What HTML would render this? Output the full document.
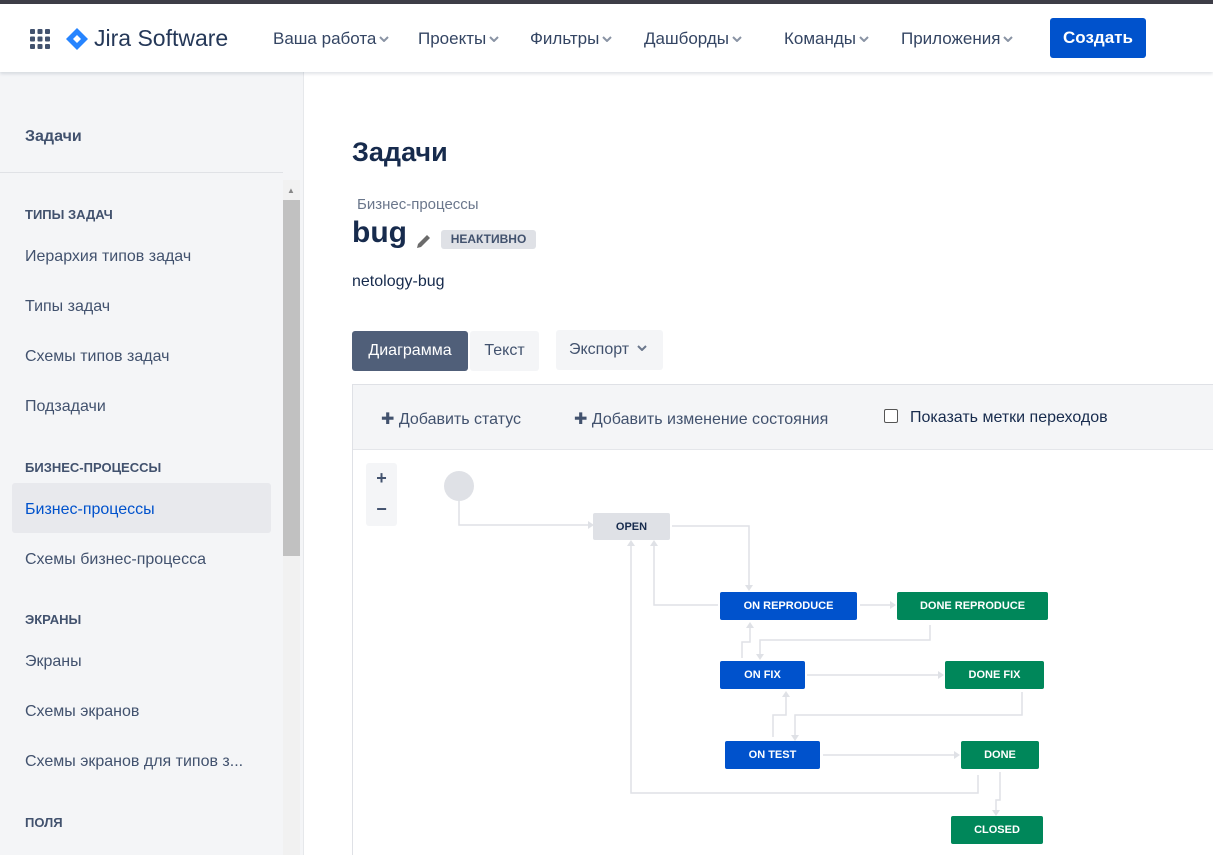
<!DOCTYPE html>
<html style="width:1213px;height:855px;overflow:hidden"><head><meta charset="utf-8"><style>
*{box-sizing:border-box;margin:0;padding:0}
body{width:1213px;height:855px;overflow:hidden;background:#fff;font-family:"Liberation Sans","DejaVu Sans",sans-serif;color:#172b4d;position:relative}
.top{position:absolute;left:0;top:0;width:1213px;height:4px;background:#3d3d47}
.hdr{position:absolute;left:0;top:4px;width:1213px;height:68px;background:#fff;box-shadow:0 2px 3px rgba(9,30,66,.12);z-index:2}
.nav{position:absolute;top:25px;font-size:17px;color:#344563}
.nav svg{margin-left:3px;vertical-align:2px}
.btn{position:absolute;left:1050px;top:14px;width:96px;height:40px;background:#0052cc;color:#fff;border-radius:3px;font-size:17px;font-weight:bold;text-align:center;line-height:40px}
.side{position:absolute;left:0;top:72px;width:304px;height:783px;background:#f4f5f7;border-right:1px solid #e6e8eb}
.si{position:absolute;left:25px;font-size:16px;color:#42526e}
.sh{position:absolute;left:25px;font-size:13px;font-weight:bold;color:#42526e}
.sel{position:absolute;left:12px;top:411px;width:259px;height:50px;background:#e8e9ed;border-radius:3px}
.sb{position:absolute;left:283px;top:108px;width:17px;height:675px;background:#f1f1f1}
.sbt{position:absolute;left:283px;top:128px;width:17px;height:356px;background:#c1c1c1}
.box{position:absolute;font-size:11px;font-weight:bold;color:#fff;text-align:center;border-radius:2px;display:flex;align-items:center;justify-content:center}
.b{background:#0052cc}.g{background:#00875a}
</style></head><body>
<div class="top"></div>
<div class="hdr">
<svg style="position:absolute;left:30px;top:25px" width="20" height="20"><g fill="#42526e"><rect x="0" y="0" width="5" height="5" rx="1"/><rect x="7.5" y="0" width="5" height="5" rx="1"/><rect x="15" y="0" width="5" height="5" rx="1"/><rect x="0" y="7.5" width="5" height="5" rx="1"/><rect x="7.5" y="7.5" width="5" height="5" rx="1"/><rect x="15" y="7.5" width="5" height="5" rx="1"/><rect x="0" y="15" width="5" height="5" rx="1"/><rect x="7.5" y="15" width="5" height="5" rx="1"/><rect x="15" y="15" width="5" height="5" rx="1"/></g></svg>
<svg style="position:absolute;left:66px;top:24px" width="22" height="22" viewBox="0 0 22 22"><path d="M11 0L22 11L11 22L0 11Z" fill="#2684ff"/><path d="M11 7L15 11L11 15L7 11Z" fill="#fff"/></svg>
<div style="position:absolute;left:94px;top:21px;font-size:23px;color:#253858">Jira Software</div>
<div class="nav" style="left:273px">Ваша работа<svg width="10" height="6"><path d="M1 1L5 5L9 1" stroke="#8993a4" stroke-width="2" fill="none"/></svg></div>
<div class="nav" style="left:418px">Проекты<svg width="10" height="6"><path d="M1 1L5 5L9 1" stroke="#8993a4" stroke-width="2" fill="none"/></svg></div>
<div class="nav" style="left:530px">Фильтры<svg width="10" height="6"><path d="M1 1L5 5L9 1" stroke="#8993a4" stroke-width="2" fill="none"/></svg></div>
<div class="nav" style="left:644px">Дашборды<svg width="10" height="6"><path d="M1 1L5 5L9 1" stroke="#8993a4" stroke-width="2" fill="none"/></svg></div>
<div class="nav" style="left:784px">Команды<svg width="10" height="6"><path d="M1 1L5 5L9 1" stroke="#8993a4" stroke-width="2" fill="none"/></svg></div>
<div class="nav" style="left:901px">Приложения<svg width="10" height="6"><path d="M1 1L5 5L9 1" stroke="#8993a4" stroke-width="2" fill="none"/></svg></div>
<div class="btn">Создать</div>
</div>
<div class="side">
<div style="position:absolute;left:25px;top:56px;font-size:16px;font-weight:bold;color:#42526e">Задачи</div>
<div style="position:absolute;left:0;top:100px;width:283px;border-top:1px solid #e0e2e6"></div>
<div class="sh" style="top:135px">ТИПЫ ЗАДАЧ</div>
<div class="si" style="top:176px">Иерархия типов задач</div>
<div class="si" style="top:226px">Типы задач</div>
<div class="si" style="top:276px">Схемы типов задач</div>
<div class="si" style="top:326px">Подзадачи</div>
<div class="sh" style="top:388px">БИЗНЕС-ПРОЦЕССЫ</div>
<div class="sel"></div>
<div class="si" style="top:429px;color:#0052cc">Бизнес-процессы</div>
<div class="si" style="top:479px">Схемы бизнес-процесса</div>
<div class="sh" style="top:540px">ЭКРАНЫ</div>
<div class="si" style="top:581px">Экраны</div>
<div class="si" style="top:631px">Схемы экранов</div>
<div class="si" style="top:681px">Схемы экранов для типов з...</div>
<div class="sh" style="top:743px">ПОЛЯ</div>
<div class="sb"></div><div class="sbt"></div>
<div style="position:absolute;left:287px;top:114px;font-size:8px;color:#888">▲</div>
</div>
<div style="position:absolute;left:352px;top:137px;font-size:27px;font-weight:bold;color:#172b4d">Задачи</div>
<div style="position:absolute;left:357px;top:196px;font-size:15px;color:#6b778c">Бизнес-процессы</div>
<div style="position:absolute;left:352px;top:216px;font-size:30px;font-weight:bold;color:#172b4d">bug</div>
<svg style="position:absolute;left:415px;top:233px" width="18" height="16" viewBox="0 0 18 16"><path d="M2 15L3 11L12 2L15 5L6 14Z" fill="#6b6b6b"/></svg>
<div style="position:absolute;left:441px;top:230px;width:95px;height:19px;background:#dfe1e6;border-radius:3px;font-size:12px;font-weight:bold;color:#42526e;text-align:center;line-height:19px">НЕАКТИВНО</div>
<div style="position:absolute;left:352px;top:273px;font-size:16px;color:#172b4d">netology-bug</div>
<div style="position:absolute;left:352px;top:331px;width:116px;height:40px;background:#505f79;color:#fff;border-radius:3px;font-size:16px;line-height:40px;text-align:center">Диаграмма</div>
<div style="position:absolute;left:470px;top:331px;width:69px;height:40px;background:#f4f5f7;color:#42526e;border-radius:3px;font-size:16px;line-height:40px;text-align:center">Текст</div>
<div style="position:absolute;left:556px;top:330px;width:107px;height:40px;background:#f4f5f7;color:#42526e;border-radius:3px;font-size:16px;line-height:40px;padding-left:13px">Экспорт <svg width="10" height="6" style="vertical-align:3px;margin-left:3px"><path d="M1 1L5 5L9 1" stroke="#6b778c" stroke-width="2" fill="none"/></svg></div>
<div style="position:absolute;left:352px;top:384px;width:861px;height:471px;border:1px solid #dfe1e6;border-right:none;border-bottom:none"></div>
<div style="position:absolute;left:353px;top:385px;width:860px;height:65px;background:#f4f5f7;border-bottom:1px solid #e4e6ea"></div>
<div style="position:absolute;left:381px;top:409px;font-size:16px;color:#42526e"><b>✚</b> Добавить статус</div>
<div style="position:absolute;left:574px;top:409px;font-size:16px;color:#42526e"><b>✚</b> Добавить изменение состояния</div>
<div style="position:absolute;left:884px;top:409px;width:14px;height:14px;border:1px solid #555;border-radius:2px;background:#fff"></div>
<div style="position:absolute;left:910px;top:409px;font-size:16px;color:#172b4d">Показать метки переходов</div>
<div style="position:absolute;left:366px;top:463px;width:31px;height:63px;background:#f4f5f7;border-radius:3px;color:#42526e;font-size:18px;text-align:center;line-height:31px;font-weight:bold">+<br>−</div>
<svg style="position:absolute;left:0;top:0" width="1213" height="855">
<g fill="none" stroke="#dfe1e6" stroke-width="1.5">
<path d="M459 500V525H588"/><path d="M672 526H749V585"/>
<path d="M718 605H654V545"/><path d="M631 545V793H978V775"/>
<path d="M860 605H890"/><path d="M930 625V640H760V654"/>
<path d="M742 658V642H750V628"/><path d="M807 675H938"/>
<path d="M1022 692V715H795V735"/><path d="M773 737V715H786V695"/>
<path d="M823 755H954"/><path d="M1000 772V800H996V810"/>
</g>
<g fill="#dfe1e6">
<path d="M588 521L594 525L588 529Z"/><path d="M745 585L749 591L753 585Z"/>
<path d="M650 546L654 540L658 546Z"/><path d="M627 546L631 540L635 546Z"/>
<path d="M890 601L896 605L890 609Z"/><path d="M756 654L760 660L764 654Z"/>
<path d="M746 628L750 622L754 628Z"/><path d="M938 671L944 675L938 679Z"/>
<path d="M791 735L795 741L799 735Z"/><path d="M782 697L786 691L790 697Z"/>
<path d="M954 751L960 755L954 759Z"/><path d="M992 810L996 816L1000 810Z"/>
</g>
<circle cx="459" cy="486" r="15" fill="#dfe1e6"/>
</svg>
<div class="box" style="left:593px;top:513px;width:77px;height:27px;background:#dfe1e6;color:#172b4d">OPEN</div>
<div class="box b" style="left:720px;top:592px;width:137px;height:28px">ON REPRODUCE</div>
<div class="box g" style="left:897px;top:592px;width:151px;height:28px">DONE REPRODUCE</div>
<div class="box b" style="left:720px;top:661px;width:85px;height:28px">ON FIX</div>
<div class="box g" style="left:945px;top:661px;width:99px;height:28px">DONE FIX</div>
<div class="box b" style="left:725px;top:741px;width:95px;height:28px">ON TEST</div>
<div class="box g" style="left:961px;top:741px;width:78px;height:28px">DONE</div>
<div class="box g" style="left:951px;top:816px;width:92px;height:28px">CLOSED</div>
</body></html>
